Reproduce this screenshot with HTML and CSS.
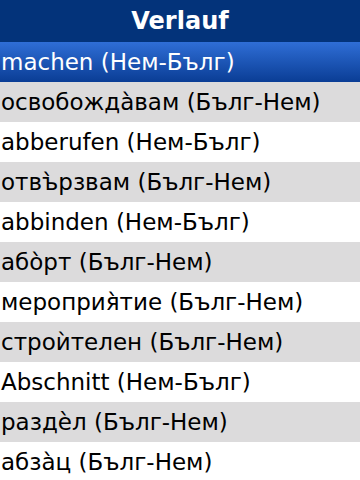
FILE: index.html
```html
<!DOCTYPE html>
<html lang="de">
<head>
  <meta charset="UTF-8">
  <meta name="viewport" content="width=device-width, initial-scale=1.0">
  <title>Verlauf</title>
  <link rel="stylesheet" href="styles.css">
</head>
<body>
  <h1 class="title">Verlauf</h1>
  <ul class="history">
    <li class="selected">machen (Нем-Бълг)</li>
    <li>освобожда̀вам (Бълг-Нем)</li>
    <li>abberufen (Нем-Бълг)</li>
    <li>отвъ̀рзвам (Бълг-Нем)</li>
    <li>abbinden (Нем-Бълг)</li>
    <li>або̀рт (Бълг-Нем)</li>
    <li>мероприя̀тие (Бълг-Нем)</li>
    <li>строѝтелен (Бълг-Нем)</li>
    <li>Abschnitt (Нем-Бълг)</li>
    <li>раздѐл (Бълг-Нем)</li>
    <li>абза̀ц (Бълг-Нем)</li>
  </ul>
</body>
</html>
```

FILE: styles.css
```css
body {
  margin: 0;
  font-family: "DejaVu Sans", sans-serif;
  background-color: white;
  color: black;
  overflow: hidden;
}

.title {
  margin: 0;
  height: 42px;
  line-height: 42px;
  background-color: #03337a;
  color: white;
  text-align: center;
  font-size: 24px;
  font-weight: bold;
}

.history {
  list-style: none;
  margin: 0;
  padding: 0;
}

.history li {
  height: 40px;
  line-height: 40px;
  padding-left: 1px;
  font-size: 23px;
  white-space: nowrap;
}

.history li:nth-child(even) {
  background-color: #dcdbdc;
}

.history li.selected {
  background: linear-gradient(to bottom, #2f6ed6, #0a3d95);
  color: white;
}
```
